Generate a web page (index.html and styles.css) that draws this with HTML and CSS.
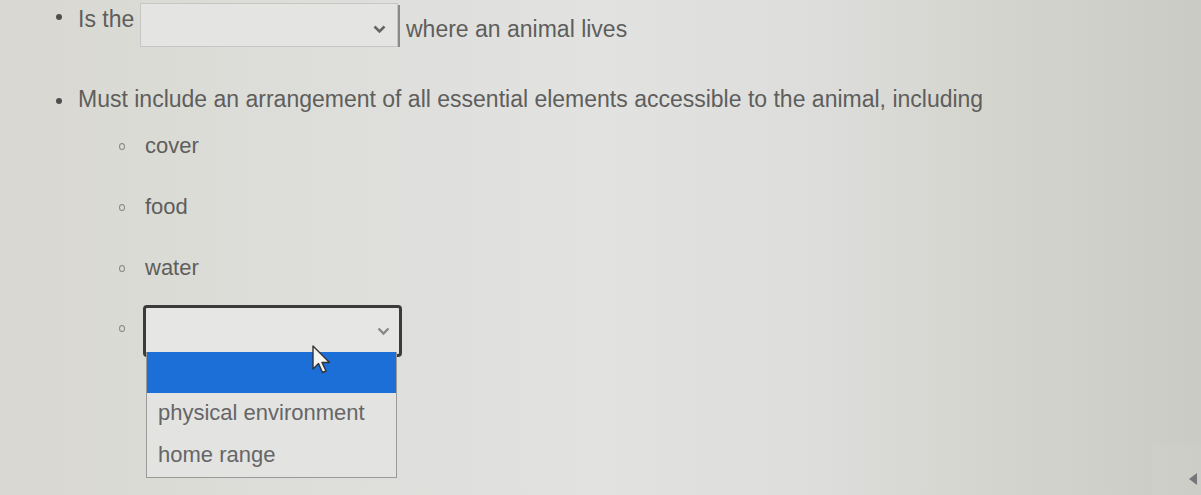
FILE: index.html
```html
<html>
<head>
<link rel="stylesheet" href="styles.css">
</head>
<body>
<div class="page">
  <ul class="outer">
    <li class="row first">
      <span class="lead">Is the</span>
      <span class="pick">
        <svg class="chev" width="13" height="9" viewBox="0 0 13 9"><path d="M1.5 1.5 L6.5 6.5 L11.5 1.5" fill="none" stroke="#666" stroke-width="2.6"/></svg>
      </span>
      <span class="tail">where an animal lives</span>
    </li>
    <li class="row second">
      <span>Must include an arrangement of all essential elements accessible to the animal, including</span>
    </li>
  </ul>
  <ul class="inner">
    <li class="sub">cover</li>
    <li class="sub">food</li>
    <li class="sub">water</li>
    <li class="sub open">
      <span class="pick focused">
        <svg class="chev" width="13" height="9" viewBox="0 0 13 9"><path d="M1.5 1.5 L6.5 6.5 L11.5 1.5" fill="none" stroke="#888" stroke-width="2.4"/></svg>
      </span>
      <div class="menu">
        <div class="opt active"></div>
        <div class="opt">physical environment</div>
        <div class="opt">home range</div>
      </div>
      <svg class="cursor" width="20" height="30" viewBox="0 0 20 30"><path d="M2 1 L2 24 L7.5 18.5 L11.5 27.5 L15 26 L11 17.5 L18.5 17.5 Z" fill="#f4f4f0" stroke="#333" stroke-width="1.4" stroke-linejoin="round"/></svg>
    </li>
  </ul>
</div>
<div class="corner"><span class="nub"></span></div>
</body>
</html>
```

FILE: styles.css
```css
body{
	margin:0;
	width:1201px;
	height:495px;
	overflow:hidden;
	position:relative;
	font-family:"Liberation Sans", Arial, sans-serif;
	font-size:23px;
	color:#5e5e5c;
	background:linear-gradient(90deg,#d9d8d1 0%,#dddeda 25%,#e2e2e1 50%,#dddddc 68%,#d4d5ce 82%,#cacbc4 100%);
}
ul{
	list-style:none;
	margin:0;
	padding:0;
}
.outer{
	padding-left:78px;
}
.row{
	position:relative;
	display:flex;
}
.row::before{
	content:"";
	position:absolute;
	left:-22px;
	width:6px;
	height:6px;
	border-radius:50%;
	background:#4e4e4c;
}
.first{
	padding-top:3px;
	height:44px;
}
.first::before{
	top:14px;
}
.lead{
	padding-top:3px;
	width:62px;
	line-height:26px;
}
.tail{
	padding-top:11px;
	padding-left:6px;
	border-left:2px solid #8a8a88;
	line-height:26px;
	height:42px;
	box-sizing:border-box;
	margin-top:2px;
}
.pick{
	position:relative;
	display:block;
	box-sizing:border-box;
	width:258px;
	height:44px;
	border:1px solid #c6c6c4;
	background:#e4e4e2;
}
.chev{
	position:absolute;
	right:11px;
	top:21px;
}
.second{
	margin-top:39px;
	line-height:26px;
}
.second::before{
	top:12px;
}
.inner{
	padding-left:145px;
	margin-top:22px;
	font-size:22px;
}
.sub{
	position:relative;
	height:61px;
	line-height:24px;
}
.sub::before{
	content:"";
	position:absolute;
	left:-26px;
	top:9px;
	width:4px;
	height:5px;
	border:1.5px solid #888;
	border-radius:50%;
}
.open{
	margin-left:-2px;
	margin-top:-12px;
}
.open::before{
	left:-24px;
	top:20px;
}
.focused{
	width:259px;
	height:52px;
	border:3px solid #3b3b3b;
	border-radius:4px;
	background:#e6e6e4;
}
.focused .chev{
	right:9px;
	top:19px;
}
.menu{
	position:absolute;
	left:3px;
	top:47px;
	width:251px;
	box-sizing:border-box;
	border:1px solid #9a9a98;
	border-top:none;
	background:#e3e3e1;
	color:#666;
}
.opt{
	height:42px;
	line-height:40px;
	padding-left:11px;
}
.active{
	height:41px;
	background:#1c6fd6;
}
.cursor{
	position:absolute;
	left:168px;
	top:40px;
}
.corner{
	position:absolute;
	right:0;
	bottom:0;
	width:49px;
	height:50px;
	background:rgba(255,255,255,0.05);
}
.nub{
	position:absolute;
	right:4px;
	bottom:10px;
	width:0;
	height:0;
	border-top:6px solid transparent;
	border-bottom:6px solid transparent;
	border-right:8px solid #77757a;
}
```
